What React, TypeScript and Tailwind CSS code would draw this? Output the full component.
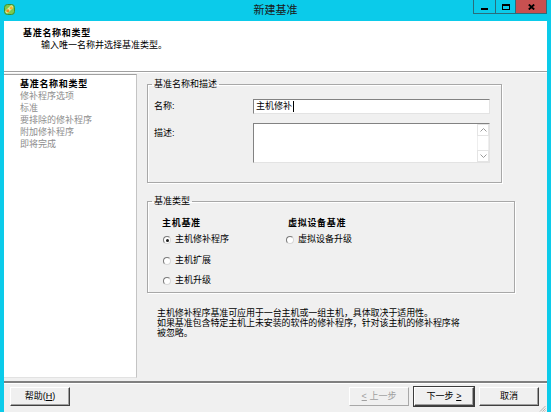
import React from "react"

const steps = ["基准名称和类型", "修补程序选项", "标准", "要排除的修补程序", "附加修补程序", "即将完成"]

function AppIcon() {
  return (
    <svg width="13" height="13" viewBox="0 0 13 13">
      <rect x="1.5" y="1.5" width="10" height="10" rx="3" fill="#7cc84e" stroke="#3f8f2c" strokeWidth="1" />
      <path d="M4 8.5 L8.5 4" stroke="#d9f2a8" strokeWidth="3.2" strokeLinecap="round" />
      <circle cx="4.8" cy="7.8" r="1.6" fill="#f08a1c" />
      <circle cx="8.2" cy="4.9" r="1.6" fill="#f6b531" />
    </svg>
  )
}

function Radio({ checked }: { checked?: boolean }) {
  return (
    <span className="w-[8px] h-[8px] rounded-full border border-t-[#7a7a7a] border-l-[#7a7a7a] border-r-[#d8d8d8] border-b-[#d8d8d8] bg-white flex items-center justify-center shrink-0">
      {checked && <span className="w-[3px] h-[3px] rounded-full bg-[#1a1a1a]" />}
    </span>
  )
}

function RadioRow({ label, checked, h }: { label: string; checked?: boolean; h: string }) {
  return (
    <div className={`${h} flex items-center gap-[4px]`}>
      <span className="ml-[1px]">
        <Radio checked={checked} />
      </span>
      <span>{label}</span>
    </div>
  )
}

function Chevron({ up }: { up?: boolean }) {
  return (
    <svg width="7" height="4" viewBox="0 0 7 4">
      <path d={up ? "M0.5 3.5 L3.5 0.5 L6.5 3.5" : "M0.5 0.5 L3.5 3.5 L6.5 0.5"} fill="none" stroke="#9a9a9a" strokeWidth="1" />
    </svg>
  )
}

function Button({ children, disabled, primary, className = "" }: { children: React.ReactNode; disabled?: boolean; primary?: boolean; className?: string }) {
  const base = "w-[60px] h-[19px] flex items-center justify-center bg-[#f0f0f0] border"
  const look = disabled
    ? "text-[#a0a0a0] border-t-white border-l-white border-r-[#a8a8a8] border-b-[#a8a8a8]"
    : primary
      ? "border-t-white border-l-white border-r-[#404040] border-b-[#404040] shadow-[inset_-1px_-1px_0_#a0a0a0] ring-1 ring-[#3c3c3c]"
      : "border-t-white border-l-white border-r-[#404040] border-b-[#404040] shadow-[inset_-1px_-1px_0_#a0a0a0]"
  return <div className={`${base} ${look} ${className}`}>{children}</div>
}

export default function App() {
  return (
    <div className="w-[551px] h-[412px] bg-[#0bcbea] flex flex-col overflow-hidden text-[9px] text-black font-['Liberation_Sans','Noto_Sans_CJK_SC',sans-serif]">
      {/* title bar */}
      <div className="h-[21px] shrink-0 grid grid-cols-[1fr_auto_1fr]">
        <div className="pl-[3px] pt-[3px]">
          <AppIcon />
        </div>
        <div className="flex items-center text-[11px] text-[#1a1a1a] leading-[21px]">新建基准</div>
        <div className="flex justify-end items-start pr-[4px]">
          <div className="flex border-x border-b border-[#2a6d7b]">
            <div className="w-[21px] h-[13px] flex items-end justify-center pb-[3px]">
              <div className="w-[7px] h-[2px] bg-black" />
            </div>
            <div className="w-[20px] h-[13px] border-l border-[#2a6d7b] flex items-center justify-center">
              <div className="w-[8px] h-[6px] border border-black border-t-2" />
            </div>
            <div className="w-[31px] h-[13px] border-l border-[#2a6d7b] bg-[#c75050] flex items-center justify-center">
              <svg width="7" height="6" viewBox="0 0 7 6">
                <path d="M0.8 0.5 L6.2 5.5 M6.2 0.5 L0.8 5.5" stroke="#000" strokeWidth="1.8" />
              </svg>
            </div>
          </div>
        </div>
      </div>

      {/* client area */}
      <div className="flex-1 flex flex-col mx-[4px] bg-[#f0f0f0] min-h-0">
        {/* header */}
        <div className="h-[50px] shrink-0 bg-white pt-[6px] pl-[19px]">
          <div className="font-bold tracking-[0.7px] leading-[12px]">基准名称和类型</div>
          <div className="pl-[18px] leading-[13px]">输入唯一名称并选择基准类型。</div>
        </div>
        <div className="h-[1px] bg-[#a0a0a0] shrink-0" />
        <div className="h-[1px] bg-white shrink-0" />

        {/* body */}
        <div className="flex-1 flex min-h-0">
          <div className="w-[133px] mt-[1px] mb-[3px] bg-white border-t border-r border-b border-t-[#a0a0a0] border-r-[#c4c4c4] border-b-[#e2e2e2] pl-[16px] pt-[3px] leading-[12px]">
            {steps.map((s, i) => (
              <div key={s} className={i === 0 ? "font-bold tracking-[0.7px]" : "text-[#8e8e8e]"}>
                {s}
              </div>
            ))}
          </div>

          <div className="flex-1 pl-[10px] pt-[5px]">
            <fieldset className="w-[355px] border border-[#a8a8a8] shadow-[inset_1px_1px_0_#fff,1px_1px_0_#fff]">
              <legend className="ml-[4px] px-[2px] leading-[12px]">基准名称和描述</legend>
              <div className="pl-[6px] pr-[11px] pt-[9px] pb-[19px]">
                <div className="flex items-center h-[15px]">
                  <div className="w-[99px]">名称:</div>
                  <div className="flex-1 h-[15px] bg-white border border-t-[#828282] border-l-[#828282] border-r-[#e3e3e3] border-b-[#e3e3e3] flex items-center pl-[2px] leading-[13px]">
                    主机修补
                    <span className="w-px h-[11px] bg-black ml-[1px]" />
                  </div>
                </div>
                <div className="flex mt-[9px]">
                  <div className="w-[99px] pt-[4px] leading-[12px]">描述:</div>
                  <div className="flex-1 h-[40px] bg-white border border-t-[#828282] border-l-[#828282] border-r-[#e3e3e3] border-b-[#e3e3e3] flex justify-end">
                    <div className="w-[12px] flex flex-col">
                      <div className="h-[12px] border border-[#e4e4e4] flex items-center justify-center">
                        <Chevron up />
                      </div>
                      <div className="flex-1 border-x border-[#eeeeee]" />
                      <div className="h-[12px] border border-[#e4e4e4] flex items-center justify-center">
                        <Chevron />
                      </div>
                    </div>
                  </div>
                </div>
              </div>
            </fieldset>

            <fieldset className="w-[368px] mt-[12px] border border-[#a8a8a8] shadow-[inset_1px_1px_0_#fff,1px_1px_0_#fff]">
              <legend className="ml-[4px] px-[2px] leading-[12px]">基准类型</legend>
              <div className="flex pl-[14px] pt-[10px] pb-[1px]">
                <div className="w-[126px]">
                  <div className="font-bold tracking-[0.7px] leading-[12px]">主机基准</div>
                  <div className="mt-[1px]">
                    <RadioRow label="主机修补程序" checked h="h-[20px]" />
                    <RadioRow label="主机扩展" h="h-[21px]" />
                    <RadioRow label="主机升级" h="h-[20px]" />
                  </div>
                </div>
                <div>
                  <div className="font-bold tracking-[0.7px] leading-[12px]">虚拟设备基准</div>
                  <div className="mt-[1px] -ml-[3px]">
                    <RadioRow label="虚拟设备升级" h="h-[20px]" />
                  </div>
                </div>
              </div>
            </fieldset>

            <div className="mt-[15px] ml-[10px] leading-[10px] tracking-[-0.1px]">
              主机修补程序基准可应用于一台主机或一组主机，具体取决于适用性。
              <br />
              如果基准包含特定主机上未安装的软件的修补程序，针对该主机的修补程序将
              <br />
              被忽略。
            </div>
          </div>
        </div>

        {/* bottom bar */}
        <div className="h-[2px] bg-[#808080] shrink-0" />
        <div className="h-[1px] bg-white shrink-0" />
        <div className="h-[28px] shrink-0 flex items-start pt-[3px] pl-[6px] pr-[7px]">
          <Button>
            帮助(<span className="underline">H</span>)
          </Button>
          <div className="flex-1" />
          <Button disabled>
            <span className="underline">&lt;</span>&nbsp;上一步
          </Button>
          <Button primary className="ml-[5px]">
            下一步&nbsp;<span className="underline">&gt;</span>
          </Button>
          <Button className="ml-[5px]">取消</Button>
          <div className="self-end -mr-[6px] ml-[0px]">
            <svg width="7" height="7" viewBox="0 0 7 7">
              <path d="M6.5 1 L1 6.5 M6.5 3.5 L3.5 6.5 M6.5 5.5 L5.5 6.5" stroke="#a0a0a0" strokeWidth="0.8" />
            </svg>
          </div>
        </div>
      </div>
    </div>
  )
}
